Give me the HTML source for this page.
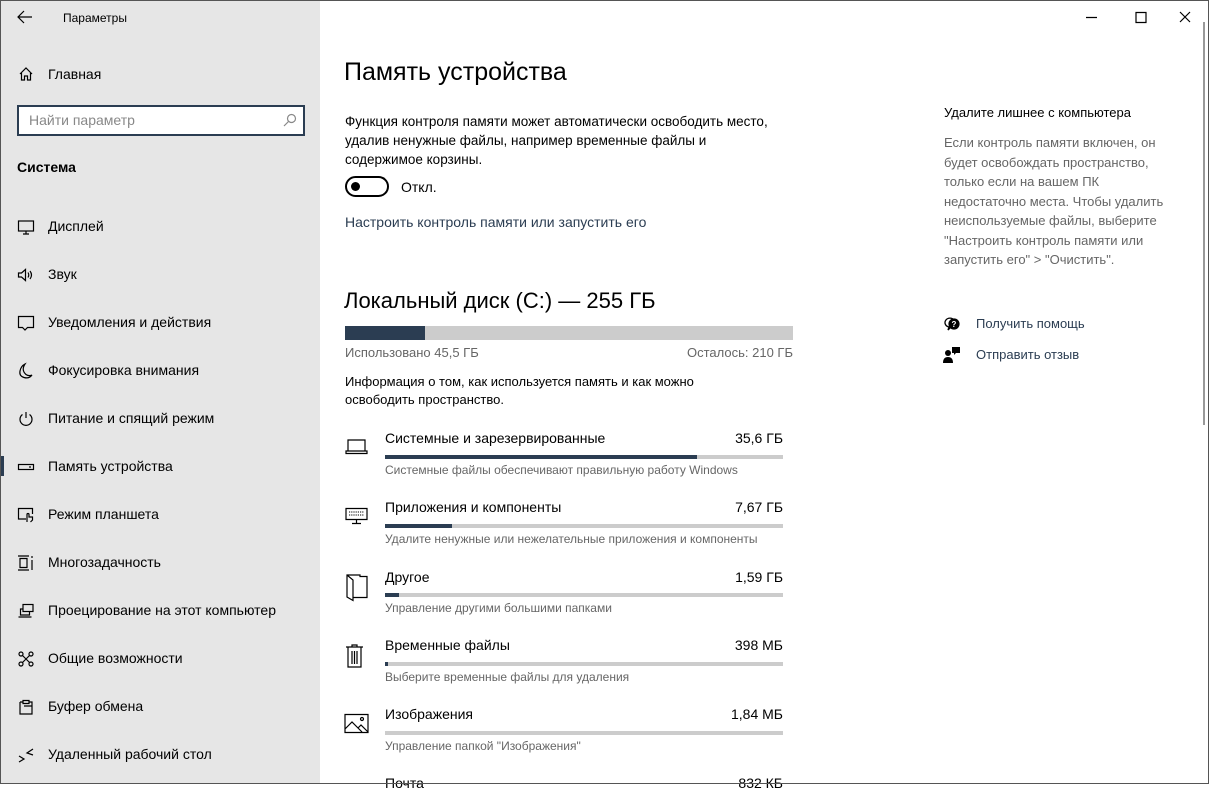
<!DOCTYPE html>
<html><head><meta charset="utf-8"><style>
*{margin:0;padding:0;box-sizing:border-box}
body{width:1209px;height:784px;overflow:hidden;font-family:"Liberation Sans",sans-serif;background:#fff;color:#000;position:relative}
.a{position:absolute;white-space:nowrap}
#side{position:absolute;left:0;top:0;width:320px;height:784px;background:#e6e6e6}
.nav{position:absolute;left:48px;font-size:14px;color:#000}
.ic{position:absolute;left:17px;width:18px;height:18px}
.t14{font-size:14px}
.v{font-size:14px;position:absolute;right:426px;white-space:nowrap}
.g{color:#666;font-size:12px}
.bar{position:absolute;height:4px;background:#ccc}
.bar i{display:block;height:100%;background:#2b3d52}
svg{fill:none;stroke:#000;stroke-width:1.2}
</style></head><body>
<div id="side">
<svg class="a" style="left:16px;top:10px" width="18" height="14" viewBox="0 0 18 14"><path d="M16 7H2M8 1L2 7l6 6"/></svg>
<div class="a" style="left:63px;top:11px;font-size:12px">Параметры</div>
<svg class="a" style="left:18px;top:66px" width="16" height="16" viewBox="0 0 16 16"><path d="M2 8L8 2l6 6M3.5 7v7h3v-4h3v4h3V7"/></svg>
<div class="nav" style="top:66px;font-size:14px">Главная</div>
<div class="a" style="left:17px;top:105px;width:288px;height:31px;border:2px solid #2b3d52;background:#fff"></div>
<div class="a" style="left:29px;top:112px;font-size:14px;color:#888">Найти параметр</div>
<svg class="a" style="left:283px;top:113px" width="14" height="14" viewBox="0 0 14 14"><circle cx="8.5" cy="5.5" r="4" stroke="#888"/><path d="M5.5 8.5L1 13" stroke="#888"/></svg>
<div class="a" style="left:17px;top:159px;font-size:14px;font-weight:bold">Система</div>

<svg class="ic" style="top:218px" viewBox="0 0 18 18"><rect x="1.5" y="3" width="15" height="10"/><path d="M9 13v3M6 16h6"/></svg>
<div class="nav" style="top:218px">Дисплей</div>
<svg class="ic" style="top:266px" viewBox="0 0 18 18"><path d="M1.5 7h3l4-3.5v11l-4-3.5h-3zM11 6.5q1.5 2.5 0 5M13 5q3 4 0 8"/></svg>
<div class="nav" style="top:266px">Звук</div>
<svg class="ic" style="top:314px" viewBox="0 0 18 18"><path d="M1.5 2.5h15v11h-6l-2.5 2.5-2.5-2.5h-4z"/></svg>
<div class="nav" style="top:314px">Уведомления и действия</div>
<svg class="ic" style="top:362px" viewBox="0 0 18 18"><path d="M8 2q-4 6 1 10.5 3 2 6 .5-3 4-8 2.5Q2 14 3 9q1-5 5-7z"/></svg>
<div class="nav" style="top:362px">Фокусировка внимания</div>
<svg class="ic" style="top:410px" viewBox="0 0 18 18"><path d="M9 2v6M5.5 4.5a6 6 0 1 0 7 0"/></svg>
<div class="nav" style="top:410px">Питание и спящий режим</div>
<div class="a" style="left:0;top:456px;width:4px;height:20px;background:#2b3d52"></div>
<svg class="ic" style="top:458px" viewBox="0 0 18 18"><rect x="1.5" y="6.5" width="15" height="5"/><path d="M12 9h2"/></svg>
<div class="nav" style="top:458px">Память устройства</div>
<svg class="ic" style="top:506px" viewBox="0 0 18 18"><path d="M9 13H1.5V2.5h14V8"/><path d="M10 16v-7.5a1 1 0 0 1 2 0V11h3.5v3l-2 2"/></svg>
<div class="nav" style="top:506px">Режим планшета</div>
<svg class="ic" style="top:554px" viewBox="0 0 18 18"><path d="M1 2h11M1 16h11M3 4.5h7v9H3zM15 2v2M15 6v10"/></svg>
<div class="nav" style="top:554px">Многозадачность</div>
<svg class="ic" style="top:602px" viewBox="0 0 18 18"><rect x="6" y="2.5" width="10" height="7"/><path d="M6 7H3.5v6h9V9.5M1.5 15h13"/></svg>
<div class="nav" style="top:602px">Проецирование на этот компьютер</div>
<svg class="ic" style="top:650px" viewBox="0 0 18 18"><circle cx="4" cy="4" r="2"/><circle cx="14" cy="4" r="2"/><circle cx="4" cy="14" r="2"/><circle cx="14" cy="14" r="2"/><path d="M5.5 5.5l7 7M12.5 5.5l-7 7"/></svg>
<div class="nav" style="top:650px">Общие возможности</div>
<svg class="ic" style="top:698px" viewBox="0 0 18 18"><path d="M3 4h2.5M12.5 4H15v12H3V4M6 2.5h6v3H6zM7 8h8v8"/></svg>
<div class="nav" style="top:698px">Буфер обмена</div>
<svg class="ic" style="top:746px" viewBox="0 0 18 18"><path d="M2 10l5 3-5 3M16 3l-6 4 6 2"/></svg>
<div class="nav" style="top:746px">Удаленный рабочий стол</div>
</div>

<svg class="a" style="left:1086px;top:10px" width="110" height="14" viewBox="0 0 110 14"><path d="M0 7.5h11M50 2.5h10v10H50zM94 2l10 10M104 2L94 12"/></svg>

<div class="a" style="left:344px;top:58px;font-size:25px;font-weight:300">Память устройства</div>
<div class="a t14" style="left:345px;top:112px;line-height:19px;font-size:13.5px">Функция контроля памяти может автоматически освободить место,<br>удалив ненужные файлы, например временные файлы и<br>содержимое корзины.</div>
<div class="a" style="left:345px;top:176px;width:44px;height:21px;border:2px solid #000;border-radius:11px"></div>
<div class="a" style="left:351px;top:182px;width:9px;height:9px;border-radius:50%;background:#000"></div>
<div class="a t14" style="left:401px;top:179px">Откл.</div>
<div class="a t14" style="left:345px;top:214px;color:#2b3d52">Настроить контроль памяти или запустить его</div>

<div class="a" style="left:344px;top:288px;font-size:22px;font-weight:300">Локальный диск (C:) — 255 ГБ</div>
<div class="bar" style="left:345px;top:326px;width:448px;height:14px"><i style="width:80px"></i></div>
<div class="a g" style="left:345px;top:345px;font-size:13px">Использовано 45,5 ГБ</div>
<div class="a g" style="right:416px;top:345px;font-size:13px">Осталось: 210 ГБ</div>
<div class="a" style="left:345px;top:373px;font-size:13px;line-height:18px">Информация о том, как используется память и как можно<br>освободить пространство.</div>

<svg class="a" style="left:345px;top:437px" width="24" height="20" viewBox="0 0 24 20"><path d="M3 3h17v11H3zM1 14h21v2.5H1z"/></svg>
<div class="a t14" style="left:385px;top:430px">Системные и зарезервированные</div>
<div class="v" style="top:430px">35,6 ГБ</div>
<div class="bar" style="left:385px;top:455px;width:398px"><i style="width:312px"></i></div>
<div class="a g" style="left:385px;top:463px">Системные файлы обеспечивают правильную работу Windows</div>

<svg class="a" style="left:345px;top:507px" width="24" height="20" viewBox="0 0 24 20"><path d="M1 1.5h21v11H1zM11.5 12.5V16M7 16.5h9"/><path d="M4 5h15M4 8h15" stroke-dasharray="1.2 1" stroke-width="1"/></svg>
<div class="a t14" style="left:385px;top:499px">Приложения и компоненты</div>
<div class="v" style="top:499px">7,67 ГБ</div>
<div class="bar" style="left:385px;top:524px;width:398px"><i style="width:67px"></i></div>
<div class="a g" style="left:385px;top:532px">Удалите ненужные или нежелательные приложения и компоненты</div>

<svg class="a" style="left:345px;top:573px" width="24" height="30" viewBox="0 0 24 30"><path d="M2 2h13v1.5h7v21H8v3L2 24zM8 27.5V7L2 2"/></svg>
<div class="a t14" style="left:385px;top:569px">Другое</div>
<div class="v" style="top:569px">1,59 ГБ</div>
<div class="bar" style="left:385px;top:593px;width:398px"><i style="width:14px"></i></div>
<div class="a g" style="left:385px;top:601px">Управление другими большими папками</div>

<svg class="a" style="left:345px;top:643px" width="20" height="26" viewBox="0 0 20 26"><path d="M1 4h17M7 4V2h5v2M3 4v20h13V4M7 8v13M9.5 8v13M12 8v13"/></svg>
<div class="a t14" style="left:385px;top:637px">Временные файлы</div>
<div class="v" style="top:637px">398 МБ</div>
<div class="bar" style="left:385px;top:662px;width:398px"><i style="width:3px"></i></div>
<div class="a g" style="left:385px;top:670px">Выберите временные файлы для удаления</div>

<svg class="a" style="left:344px;top:713px" width="26" height="22" viewBox="0 0 26 22"><path d="M1 1.5h23v18H1zM1 16l7-7 10 10M14 15l3-3 7 7"/><circle cx="18" cy="6" r="1.5"/></svg>
<div class="a t14" style="left:385px;top:706px">Изображения</div>
<div class="v" style="top:706px">1,84 МБ</div>
<div class="bar" style="left:385px;top:731px;width:398px"></div>
<div class="a g" style="left:385px;top:739px">Управление папкой "Изображения"</div>
<div class="a t14" style="left:385px;top:775px">Почта</div>
<div class="v" style="top:775px">832 КБ</div>

<div class="a t14" style="left:944px;top:105px;font-size:13px">Удалите лишнее с компьютера</div>
<div class="a g" style="left:944px;top:133px;font-size:13px;line-height:19.5px">Если контроль памяти включен, он<br>будет освобождать пространство,<br>только если на вашем ПК<br>недостаточно места. Чтобы удалить<br>неиспользуемые файлы, выберите<br>"Настроить контроль памяти или<br>запустить его" &gt; "Очистить".</div>
<svg class="a" style="left:943px;top:316px" width="18" height="16" viewBox="0 0 18 16"><path d="M6 11a5 4.5 0 1 1 2 0l-3 3z" stroke-width="1.3"/><circle cx="11" cy="8" r="5" fill="#000"/><text x="11" y="11" font-size="8" fill="#fff" stroke="none" text-anchor="middle" font-family="Liberation Sans" font-weight="bold">?</text></svg>
<div class="a t14" style="left:976px;top:316px;font-size:13px;color:#2b3d52">Получить помощь</div>
<svg class="a" style="left:943px;top:346px" width="18" height="18" viewBox="0 0 18 18"><circle cx="5" cy="7" r="3" fill="#000" stroke="none"/><path d="M0 17q0-6 5-6t5 6z" fill="#000" stroke="none"/><path d="M9 1h8v6h-4l-2 2V7H9z" fill="#000" stroke="none"/></svg>
<div class="a t14" style="left:976px;top:347px;font-size:13px;color:#2b3d52">Отправить отзыв</div>

<div class="a" style="left:1203px;top:22px;width:2px;height:403px;background:#999"></div>
<div class="a" style="left:0;top:0;width:1209px;height:784px;border:1px solid #555;pointer-events:none"></div>
</body></html>
